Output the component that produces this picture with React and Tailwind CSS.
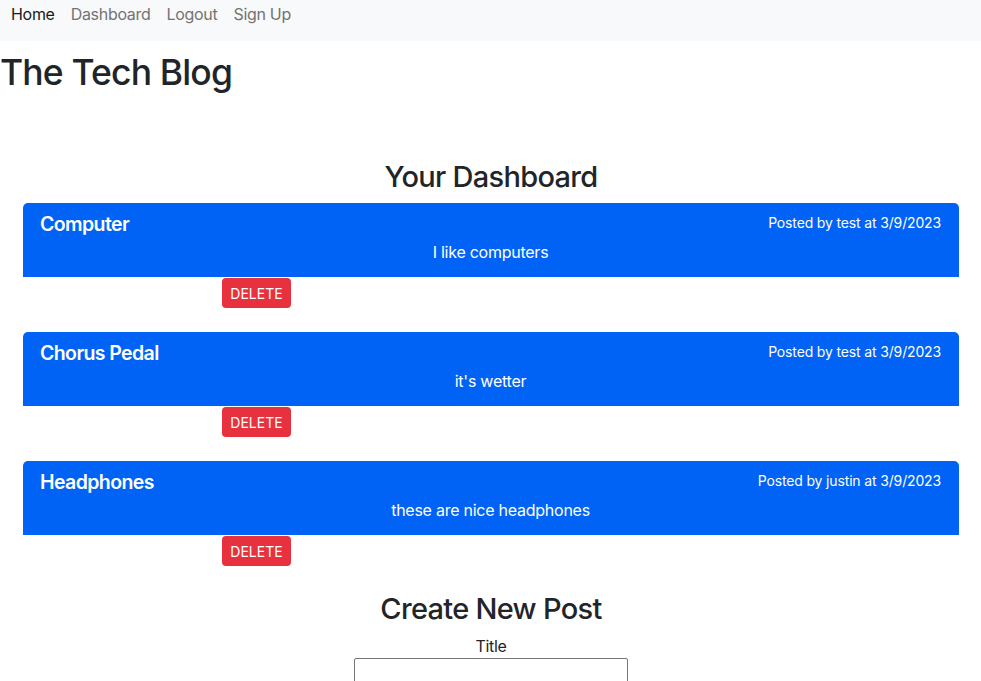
import React from "react";

const posts = [
  { id: 1, title: "Computer", body: "I like computers", author: "test", date: "3/9/2023" },
  { id: 2, title: "Chorus Pedal", body: "it's wetter", author: "test", date: "3/9/2023" },
  { id: 3, title: "Headphones", body: "these are nice headphones", author: "justin", date: "3/9/2023" },
];

function Nav() {
  return (
    <nav className="h-[41px] bg-[#f8f9fa] flex items-start pt-[2px] pl-[3px]">
      <a className="px-2 leading-6 text-[16px] tracking-[-0.3px] text-[#1a1a1a]">Home</a>
      <a className="px-2 leading-6 text-[16px] tracking-[-0.3px] text-[#737373]">Dashboard</a>
      <a className="px-2 leading-6 text-[16px] tracking-[-0.3px] text-[#737373]">Logout</a>
      <a className="px-2 leading-6 text-[16px] tracking-[-0.3px] text-[#737373]">Sign Up</a>
    </nav>
  );
}

function PostCard({ post }) {
  return (
    <div className="mb-6">
      <div className="h-[74px] bg-[#0063f5] rounded-t-[5px] text-white pl-[17px] pr-[18px] pt-[9px]">
        <div className="h-6 flex justify-between items-start">
          <h3 className="text-[19.5px] leading-6 tracking-[-0.6px] font-semibold">{post.title}</h3>
          <span className="mt-[1px] text-[14px] leading-5 tracking-[-0.15px]">
            Posted by {post.author} at {post.date}
          </span>
        </div>
        <p className="mt-1 text-center text-[16px] leading-6 tracking-[-0.25px]">{post.body}</p>
      </div>
      <button className="mt-[1px] ml-[199px] w-[69px] h-[30px] rounded-[4px] bg-[#e8313f] text-white text-[14px] uppercase">
        Delete
      </button>
    </div>
  );
}

export default function App() {
  return (
    <div
      className="min-h-screen bg-white text-[#212529]"
      style={{ fontFamily: "Inter, 'Noto Sans', sans-serif" }}
    >
      <Nav />
      <h1 className="mt-[10px] text-[35.5px] leading-[44px] font-medium tracking-[-0.85px]">
        The Tech Blog
      </h1>
      <main className="mt-[64px] px-[23px] mr-[-1px]">
        <h2 className="text-center text-[29px] leading-9 font-medium mb-[8px] tracking-[-0.7px]">
          Your Dashboard
        </h2>
        {posts.map((post) => (
          <PostCard key={post.id} post={post} />
        ))}
        <section className="flex flex-col items-center -mt-[24px]">
          <h2 className="mt-[25px] text-[29px] leading-9 font-medium tracking-[-0.7px]">
            Create New Post
          </h2>
          <form className="flex flex-col items-center mt-[7px]">
            <label className="text-[16px] leading-6 tracking-[-0.3px]">Title</label>
            <input
              type="text"
              className="w-[274px] h-[40px] border border-[#767676] rounded-[2px] bg-white"
            />
          </form>
        </section>
      </main>
    </div>
  );
}
